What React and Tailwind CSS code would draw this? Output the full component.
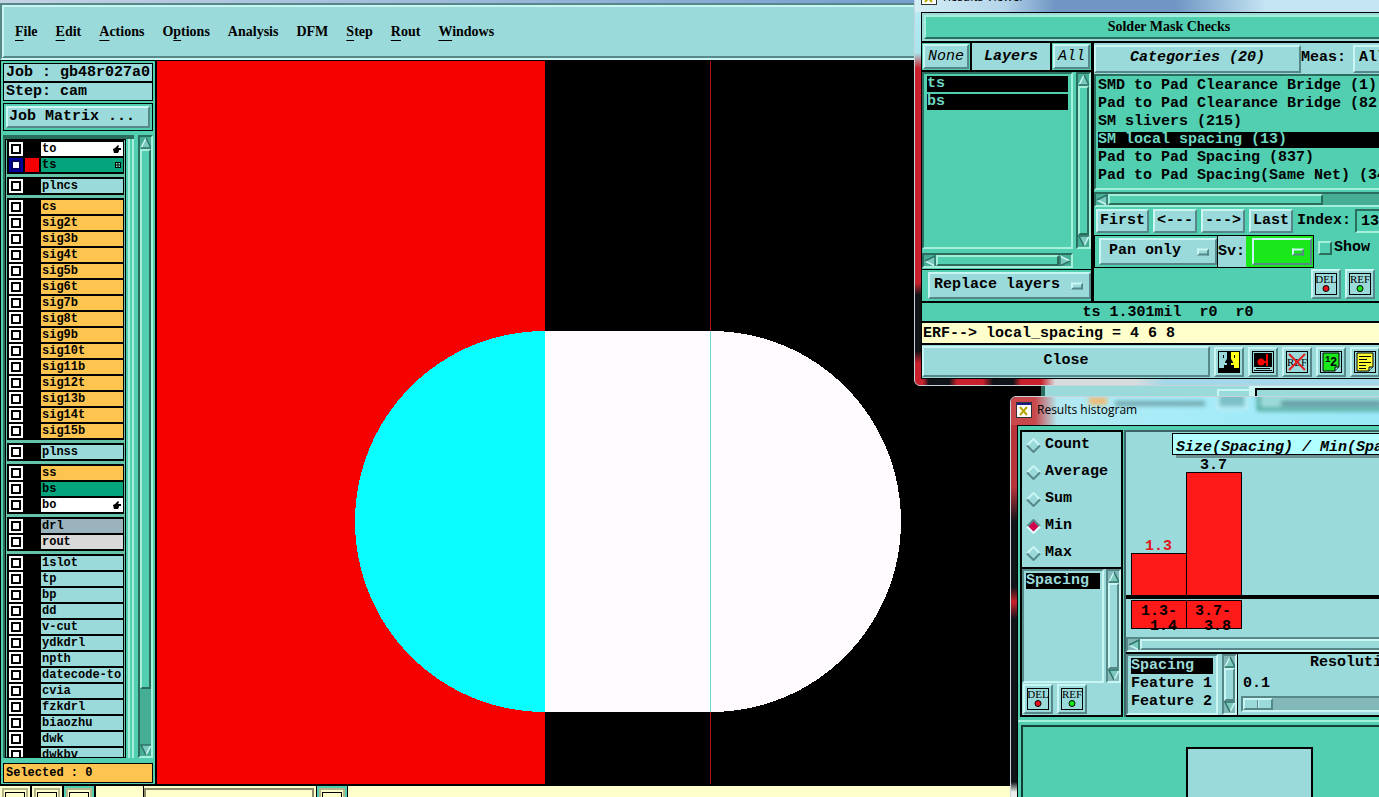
import React, { useState } from 'react';

const layerGroups = [
  [
    { name: 'to', tone: 'bg-white', mark: 'hand' },
    { name: 'ts', tone: 'bg-[#04a57c]', mark: 'grid', active: true },
  ],
  [{ name: 'plncs', tone: 'bg-[#9bdada]' }],
  ['cs', 'sig2t', 'sig3b', 'sig4t', 'sig5b', 'sig6t', 'sig7b', 'sig8t', 'sig9b', 'sig10t', 'sig11b', 'sig12t', 'sig13b', 'sig14t', 'sig15b'].map(
    (name) => ({ name, tone: 'bg-[#fdc54f]' })
  ),
  [{ name: 'plnss', tone: 'bg-[#9bdada]' }],
  [
    { name: 'ss', tone: 'bg-[#fdc54f]' },
    { name: 'bs', tone: 'bg-[#04a57c]' },
    { name: 'bo', tone: 'bg-white', mark: 'hand' },
  ],
  [
    { name: 'drl', tone: 'bg-[#9ab3bd]' },
    { name: 'rout', tone: 'bg-[#d9d9d9]' },
  ],
  ['1slot', 'tp', 'bp', 'dd', 'v-cut', 'ydkdrl', 'npth', 'datecode-to', 'cvia', 'fzkdrl', 'biaozhu', 'dwk', 'dwkbv'].map(
    (name) => ({ name, tone: 'bg-[#9bdada]' })
  ),
];

// [before, underlined letter, after]
const menus = [
  ['', 'F', 'ile'],
  ['', 'E', 'dit'],
  ['', 'A', 'ctions'],
  ['O', 'p', 'tions'],
  ['Analysis', '', ''],
  ['DFM', '', ''],
  ['', 'S', 'tep'],
  ['', 'R', 'out'],
  ['', 'W', 'indows'],
];

const categories = [
  'SMD to Pad Clearance Bridge (1)',
  'Pad to Pad Clearance Bridge (82)',
  'SM slivers (215)',
  'SM local spacing (13)',
  'Pad to Pad Spacing (837)',
  'Pad to Pad Spacing(Same Net) (34)',
];

const raised = 'border-2 border-t-[#c9f5f3] border-l-[#c9f5f3] border-r-[#56888a] border-b-[#56888a]';
const sunken = 'border-2 border-t-[#56888a] border-l-[#56888a] border-r-[#c9f5f3] border-b-[#c9f5f3]';
const raisedTeal = 'border-2 border-t-[#a6efdb] border-l-[#a6efdb] border-r-[#2a6d5d] border-b-[#2a6d5d]';
const sunkenTeal = 'border-2 border-t-[#2a6d5d] border-l-[#2a6d5d] border-r-[#a6efdb] border-b-[#a6efdb]';

function Arrow({ dir }) {
  const turn = { up: 0, right: 90, down: 180, left: 270 }[dir];
  return (
    <svg width="12" height="12" viewBox="0 0 12 12" className="shrink-0">
      <g transform={`rotate(${turn} 6 6)`}>
        <path d="M6 1 L11 11 H1 Z" fill="#7cc9bd" />
        <path d="M6 1 L1 11" stroke="#c9f5f3" strokeWidth="1.5" />
        <path d="M6 1 L11 11 H1" fill="none" stroke="#2f746a" strokeWidth="1.5" />
      </g>
    </svg>
  );
}

function Scrollbar({ horizontal, teal, thumb = 'flex-1', className = '' }) {
  const edge = teal ? sunkenTeal : sunken;
  const knob = teal ? `${raisedTeal} bg-[#52cfb0]` : `${raised} bg-[#9bdada]`;
  const trough = teal ? 'bg-[#45ae94]' : 'bg-[#82b8b8]';
  return (
    <div className={`flex shrink-0 items-center overflow-hidden ${horizontal ? 'h-[15px]' : 'w-[15px] flex-col'} ${edge} ${trough} ${className}`}>
      <Arrow dir={horizontal ? 'left' : 'up'} />
      <div className={`${thumb} ${horizontal ? 'h-full' : 'w-full'} ${knob}`} />
      {thumb !== 'flex-1' && <div className="flex-1" />}
      <Arrow dir={horizontal ? 'right' : 'down'} />
    </div>
  );
}

function LayerMark({ kind }) {
  if (kind === 'hand') {
    return (
      <svg width="8" height="8" viewBox="0 0 8 8">
        <path d="M0 4 L2 3 L5 0 L6 1 L5 3 H8 V5 H6 V6 L5 8 H1 Z" fill="#000" />
      </svg>
    );
  }
  return (
    <svg width="6" height="6" viewBox="0 0 6 6">
      <path d="M0 0H6V6H0Z" fill="#000" />
      <path d="M1 1H2.500V2.500H1ZM3.500 1H5V2.500H3.500ZM1 3.500H2.500V5H1ZM3.500 3.500H5V5H3.500Z" fill="#8fe0c8" />
    </svg>
  );
}

function LayerRow({ layer }) {
  return (
    <li className="flex h-4 items-center py-px pr-px pl-[2px]">
      <label className={`flex size-[14px] shrink-0 items-center justify-center ${layer.active ? 'bg-[#0000a0]' : 'bg-white'}`}>
        <input
          type="checkbox"
          aria-label={layer.name}
          className={`size-[10px] appearance-none border-2 bg-white ${layer.active ? 'border-[#000066]' : 'border-black'}`}
        />
      </label>
      <span className={`mx-[2px] h-[14px] w-[14px] shrink-0 ${layer.active ? 'bg-[#f60000]' : 'bg-black'}`} />
      <span className={`flex h-[14px] min-w-0 flex-1 items-center justify-between pr-[2px] pl-px text-[12px] leading-[14px] whitespace-nowrap ${layer.tone}`}>
        {layer.name}
        {layer.mark && <LayerMark kind={layer.mark} />}
      </span>
    </li>
  );
}

function Sidebar() {
  return (
    <aside className="flex w-[157px] shrink-0 flex-col border-r-2 border-l border-black bg-[#52cfb0] pt-[2px] pr-[2px] pl-[2px]">
      <div className="border border-black bg-[#9bdada] pl-[2px] leading-[17px] whitespace-pre">Job : gb48r027a0</div>
      <div className="border border-black bg-[#9bdada] pl-[2px] leading-[17px]">Step: cam</div>
      <div className="mt-[2px] border border-black p-[2px]">
        <button className={`block h-[22px] w-full bg-[#9bdada] pl-px text-left leading-[18px] ${raised}`}>Job Matrix ...</button>
      </div>
      <div className="mt-1 flex min-h-0 flex-1 gap-1">
        <div className="flex min-w-0 flex-1 border-t-4 border-l-2 border-[#2a6d5d]">
          <ul className="flex min-w-0 flex-1 flex-col gap-[3px] overflow-hidden border border-black bg-[#63c4aa] pr-px pl-px">
            {layerGroups.map((group) => (
              <li key={group[0].name} className="shrink-0 bg-black py-px">
                <ul>
                  {group.map((layer) => (
                    <LayerRow key={layer.name} layer={layer} />
                  ))}
                </ul>
              </li>
            ))}
          </ul>
          <div className="ml-[2px] w-[6px] border-x-2 border-[#a6efdb]" />
        </div>
        <Scrollbar teal thumb="h-[540px]" />
      </div>
      <div className="mt-[5px] mb-px h-[20px] shrink-0 border border-black bg-[#fdc54f] pl-[2px] text-[12px] leading-[18px]">Selected : 0</div>
    </aside>
  );
}

function Board() {
  return (
    <svg className="min-w-0 flex-1 bg-black" shapeRendering="crispEdges">
      <rect width="388" height="100%" fill="#f60000" />
      <path d="M388 270 A190 190.500 0 0 0 388 651 Z" fill="#08fdff" />
      <path d="M388 270 H554 A190 190.500 0 0 1 554 651 H388 Z" fill="#fffbff" />
      <rect x="553" width="1" height="270" fill="#b01018" />
      <rect x="553" y="270" width="1" height="381" fill="#63d8d8" />
      <rect x="553" y="651" width="1" height="100%" fill="#b01018" />
    </svg>
  );
}

function BottomBar() {
  return (
    <footer className="flex h-[13px] shrink-0 overflow-hidden border-t-2 border-black bg-[#ffffcc]">
      {[0, 1, 2].map((n) => (
        <div key={n} className={`flex w-8 items-start justify-center border-r-2 border-black pt-[2px] ${n === 2 ? 'bg-[#52cfb0]' : 'bg-[#ffffcc]'}`}>
          <div className="h-4 w-[26px] border-2 border-[#b5b58c] bg-[#ffffcc] px-px pt-[2px]">
            <div className="h-4 border border-black" />
          </div>
        </div>
      ))}
      <div className="w-12 border-r border-black" />
      <div className="mt-[2px] h-4 w-[170px] border-2 border-[#8c8c6a]" />
      <div className="ml-[2px] flex w-[32px] justify-center border-x border-black bg-[#52cfb0] pt-[2px]">
        <div className="h-4 w-[26px] border-2 border-[#b5b58c] bg-[#ffffcc] px-px pt-[2px]">
          <div className="h-4 border border-black" />
        </div>
      </div>
    </footer>
  );
}

function XIcon() {
  return (
    <svg width="16" height="16" viewBox="0 0 16 16" className="shrink-0">
      <path d="M0 0H16V16H0Z" fill="#333" />
      <path d="M1 1H15V15H1Z" fill="#fff" />
      <path d="M1 1H15V3H1Z" fill="#1a1a8c" />
      <path d="M4 5 L11 13 M11 5 L4 13" stroke="#b5a800" strokeWidth="2" />
    </svg>
  );
}

function SmallButton({ label, children }) {
  return (
    <button aria-label={label} className={`flex size-[30px] shrink-0 items-center justify-center bg-[#9bdada] ${raised}`}>
      {children}
    </button>
  );
}

function StampIcon({ text, color }) {
  return (
    <svg width="22" height="22" viewBox="0 0 22 22">
      <rect x="0.500" y="0.500" width="21" height="21" fill="none" stroke="#000" />
      <text x="11" y="10" textAnchor="middle" className="font-['Liberation_Serif'] text-[11px] font-normal">{text}</text>
      <circle cx="11" cy="15.500" r="3" fill={color} stroke="#000" />
    </svg>
  );
}

function StampButtons() {
  return (
    <div className="flex gap-1">
      <SmallButton label="Delete"><StampIcon text="DEL" color="#e8101c" /></SmallButton>
      <SmallButton label="Refresh"><StampIcon text="REF" color="#1be81b" /></SmallButton>
    </div>
  );
}

function OptionMenu({ label, value, className }) {
  return (
    <div className="relative">
      <select aria-label={label} defaultValue={value} className={`block w-full appearance-none ${raised} ${className}`}>
        <option value={value}>{value}</option>
      </select>
      <span className={`pointer-events-none absolute top-1/2 right-2 h-[7px] w-3 -translate-y-1/2 ${raised}`} />
    </div>
  );
}

function ResultsViewer() {
  return (
    <section className="absolute -top-[18px] left-[914px] flex w-[508px] flex-col rounded-md border border-[#c8d4dc] bg-[linear-gradient(180deg,#bfeefa_0,#a8e4ec_70px,#c8202c_85px,#c8202c_300px,#101418_312px,#101418_368px,#c8202c_380px)] px-[6px]">
      <header className="-mx-[6px] flex h-[29px] shrink-0 items-center gap-[6px] rounded-t-md bg-[linear-gradient(90deg,#d4eef6_0,#b4d4ea_90px,#6f96c4_140px,#6f96c4_260px,#c4e4f2_350px,#c4e4f2_100%)] pb-px pl-[6px] font-['Open_Sans',sans-serif] text-[12px] font-normal">
        <XIcon /> Results Viewer
      </header>
      <div className="border border-black bg-[#9bdada]">
        <h2 className={`mt-[2px] ml-[2px] h-[24px] bg-[#52cfb0] text-center font-['Liberation_Serif',serif] text-[14px] leading-[19px] ${raisedTeal}`}>Solder Mask Checks</h2>
        <div className="mt-[2px] flex border-t-2 border-black">
          <div className="flex w-[172px] shrink-0 flex-col border-r-3 border-black bg-[#52cfb0]">
            <div className="flex h-[29px] border-b-2 border-black italic">
              <div className="w-[50px] border-r-2 border-black p-px">
                <button className={`h-full w-full bg-[#9bdada] font-normal italic ${raised}`}>None</button>
              </div>
              <div className="flex-1 bg-[#9bdada] text-center leading-[27px]">Layers</div>
              <div className="w-[41px] border-l-2 border-black p-px">
                <button className={`h-full w-full bg-[#9bdada] font-normal italic ${raised}`}>All</button>
              </div>
            </div>
            <div className="flex h-[177px] justify-between">
              <ul className={`w-[151px] px-[3px] pt-[2px] leading-4 text-[#6fd8c2] ${sunkenTeal}`}>
                <li className="mb-[2px] h-4 bg-black">ts</li>
                <li className="h-4 bg-black">bs</li>
              </ul>
              <Scrollbar teal />
            </div>
            <Scrollbar horizontal teal className="mt-1 w-[151px]" />
            <div className="mt-px border-t border-black py-[2px] pl-[6px]">
              <OptionMenu label="Layer action" value="Replace layers" className="h-[27px] bg-[#9bdada] pl-1" />
            </div>
          </div>
          <div className="flex min-w-0 flex-1 flex-col bg-[#52cfb0] whitespace-nowrap">
            <div className="flex h-[31px] items-center bg-[#9bdada]">
              <button className={`h-[28px] w-[207px] shrink-0 bg-[#9bdada] italic ${raised}`}>Categories (20)</button>
              <span className="w-[52px]">Meas:</span>
              <div className="w-[60px]">
                <OptionMenu label="Meas" value="All" className="h-[28px] bg-[#9bdada] pl-1" />
              </div>
            </div>
            <ul className={`h-[116px] overflow-hidden px-[2px] pt-px leading-[18px] ${sunkenTeal}`}>
              {categories.map((name) => (
                <li key={name} className={name.startsWith('SM local') ? 'my-px h-4 bg-black leading-4 text-[#6fd8c2]' : ''}>{name}</li>
              ))}
            </ul>
            <Scrollbar horizontal teal thumb="w-[215px]" className="mt-[2px]" />
            <div className="flex h-[28px] items-start gap-1 pt-[2px] pl-[2px] leading-[20px]">
              <button className={`h-[24px] w-[53px] shrink-0 bg-[#9bdada] ${raised}`}>First</button>
              <button className={`h-[24px] w-[44px] shrink-0 bg-[#9bdada] ${raised}`}>&lt;---</button>
              <button className={`h-[24px] w-[44px] shrink-0 bg-[#9bdada] ${raised}`}>---&gt;</button>
              <button className={`h-[24px] w-[44px] shrink-0 bg-[#9bdada] ${raised}`}>Last</button>
              <label htmlFor="index" className="w-[54px] shrink-0 leading-[24px]">Index:</label>
              <input id="index" defaultValue="13" className={`h-[24px] w-[56px] bg-[#52cfb0] px-1 ${sunkenTeal}`} />
            </div>
            <div className="flex h-[33px]">
              <div className="flex w-[220px] shrink-0 border border-black">
                <div className="w-[123px] border-r border-black py-[2px] pl-1">
                  <OptionMenu label="Pan mode" value="Pan only" className="h-[27px] bg-[#9bdada] pl-2" />
                </div>
                <span className="w-[28px] bg-[#9bdada] leading-[31px]">Sv:</span>
                <div className="flex-1 bg-[#1be81b] py-[2px] pr-px pl-[6px]">
                  <OptionMenu label="Severity" value=" " className="h-[27px] bg-[#1be81b]" />
                </div>
              </div>
              <label className="ml-1 flex h-[26px] items-center gap-[2px]">
                <input type="checkbox" className={`size-[14px] appearance-none bg-[#52cfb0] ${raisedTeal}`} />
                Show
              </label>
            </div>
            <div className="flex h-[33px] items-start pt-px pl-[217px]">
              <StampButtons />
            </div>
          </div>
        </div>
        <div className="h-[22px] border-y-2 border-black bg-[#52cfb0] text-center leading-[20px] whitespace-pre">ts 1.301mil  r0  r0</div>
        <div className="h-[22px] border-b-2 border-black bg-[#ffffcc] pl-px leading-[22px]">ERF--&gt; local_spacing = 4 6 8</div>
        <div className="flex h-[33px] items-center gap-1">
          <button className={`h-[31px] w-[288px] shrink-0 bg-[#9bdada] ${raised}`}>Close</button>
          <SmallButton label="Compare">
            <svg width="22" height="22" viewBox="0 0 22 22">
              <path d="M0 0H22V22H0Z" fill="#000" />
              <path d="M1 1H9V8L7 11V12H9V14H6V17H1Z" fill="#9bdada" />
              <path d="M13 1H21V17H16V14H13V12H15V11L13 8Z" fill="#ffff1a" />
              <path d="M5 4H6V7H5ZM16 4H17V7H16Z" fill="#000" />
            </svg>
          </SmallButton>
          <SmallButton label="Snapshot">
            <svg width="22" height="22" viewBox="0 0 22 22">
              <rect x="0.500" y="0.500" width="21" height="21" fill="none" stroke="#000" />
              <path d="M2 2H20V16H2Z" fill="#000" />
              <circle cx="9" cy="11" r="3.500" fill="#f60000" />
              <path d="M12 10H14V3H16V15H14V12H12Z" fill="#f60000" />
              <path d="M4 17.500H18M2 19.500H20" stroke="#000" />
            </svg>
          </SmallButton>
          <SmallButton label="No reference">
            <svg width="22" height="22" viewBox="0 0 22 22">
              <rect x="0.500" y="0.500" width="21" height="21" fill="none" stroke="#000" />
              <text x="11" y="15" textAnchor="middle" className="font-['Liberation_Serif'] text-[11px] font-normal">REF</text>
              <path d="M3 3 L19 19 M19 3 L3 19" stroke="#e02020" strokeWidth="2" />
            </svg>
          </SmallButton>
          <SmallButton label="Numbering">
            <svg width="22" height="22" viewBox="0 0 22 22">
              <rect x="0.500" y="0.500" width="21" height="21" fill="none" stroke="#000" />
              <path d="M3 2H19V16L15 20H3Z" fill="#1be81b" stroke="#000" />
              <path d="M15 20V16H19" fill="#9bdada" stroke="#000" />
              <text x="5" y="11" className="text-[9px]">1</text>
              <text x="10" y="15" className="text-[12px]">2</text>
            </svg>
          </SmallButton>
          <SmallButton label="Notes">
            <svg width="22" height="22" viewBox="0 0 22 22">
              <rect x="0.500" y="0.500" width="21" height="21" fill="none" stroke="#000" />
              <path d="M3 2H19V16L15 20H3Z" fill="#ffff33" stroke="#000" />
              <path d="M15 20V16H19" fill="#9bdada" stroke="#000" />
              <path d="M5 5.500H17M5 8.500H13M5 11.500H17M5 14.500H12M5 17.500H12" stroke="#000" />
            </svg>
          </SmallButton>
        </div>
      </div>
      <div className="-mx-[6px] h-[6px] rounded-b-md bg-[linear-gradient(90deg,#c8202c_0,#c8202c_8px,#101418_14px,#101418_34px,#c8202c_42px,#c8202c_68px,#101418_78px,#101418_98px,#c8202c_106px,#c8202c_126px,#d8dcdc_140px,#d8dcdc_220px,#a4d8e8_250px,#a4d8e8_100%)]" />
    </section>
  );
}

function StatRadio({ name, checked, onSelect }) {
  return (
    <label className="flex h-[27px] items-center">
      <input type="radio" name="stat" checked={checked} onChange={() => onSelect(name)} className="sr-only" />
      <svg width="15" height="15" viewBox="0 0 15 15" className="mr-1">
        <path d="M7.500 2 L13 7.500 L7.500 13 L2 7.500 Z" fill={checked ? '#d0004c' : '#9bdada'} />
        <path d="M1 7.500 L7.500 1 L14 7.500" fill="none" stroke={checked ? '#56888a' : '#c9f5f3'} strokeWidth="2" />
        <path d="M1 7.500 L7.500 14 L14 7.500" fill="none" stroke={checked ? '#e4ffff' : '#56888a'} strokeWidth="2" />
      </svg>
      {name}
    </label>
  );
}

function Histogram() {
  return (
    <svg width="100%" height="205" className="block">
      <rect x="50" y="5" width="260" height="21" fill="#6b8f92" />
      <rect x="46.500" y="1.500" width="260" height="21" fill="#b2ffff" stroke="#000" />
      <text x="50" y="19" fontStyle="italic">Size(Spacing) / Min(Spacing)</text>
      <g fill="#ff1a1a" stroke="#000">
        <rect x="5.500" y="121.500" width="55" height="42" />
        <rect x="60.500" y="40.500" width="55" height="123" />
        <rect x="5.500" y="168.500" width="55" height="28" />
        <rect x="60.500" y="168.500" width="55" height="28" />
      </g>
      <rect y="163" width="100%" height="4" fill="#000" />
      <text x="74" y="37">3.7</text>
      <text x="19" y="118" fill="#e01818">1.3</text>
      <text x="15" y="183">1.3-</text>
      <text x="24" y="198">1.4</text>
      <text x="69" y="183">3.7-</text>
      <text x="78" y="198">3.8</text>
    </svg>
  );
}

function ResultsHistogram() {
  const [stat, setStat] = useState('Min');
  return (
    <section className="absolute top-[396px] left-[1010px] flex h-[430px] w-[540px] flex-col rounded-t-md border border-[#c8d4dc] bg-[linear-gradient(180deg,#b8343a_0,#b8343a_90px,#101418_125px,#101418_190px,#c8202c_205px,#101418_222px,#101418_385px,#eeeeee_395px)] px-[6px]">
      <header className="relative -mx-[6px] h-[28px] shrink-0 overflow-hidden rounded-t-md bg-[linear-gradient(90deg,#c8484c_0,#c8484c_24px,#b4e8f0_46px,#a8ecf8_150px,#8fe4f6_100%)]">
        {/* what shows through the glass title bar */}
        <div className="absolute inset-0 blur-[2px]">
          <div className="absolute top-0 left-[78px] h-2 w-[18px] bg-[#eebb77]" />
          <div className="absolute top-[4px] left-[104px] h-[5px] w-[90px] bg-[#6fa5ac]" />
          <div className="absolute -top-2 left-[206px] h-5 w-[30px] border-2 border-[#d8fbff] bg-[#7cc0c8]" />
          <div className="absolute -top-2 left-[246px] h-[22px] w-[300px] border-b-3 border-l-3 border-[#45a090] bg-[#9bdada]" />
          <div className="absolute top-[4px] left-[270px] h-[5px] w-[100px] bg-[#5c969e]" />
        </div>
        <div className="relative flex h-[26px] items-center gap-[5px] pl-[5px] font-['Open_Sans',sans-serif] text-[12px] font-normal">
          <XIcon /> Results histogram
        </div>
      </header>
      <div className="flex min-h-0 flex-1 flex-col border border-black bg-[#52cfb0]">
        <div className="mt-1 flex h-[287px] shrink-0 gap-px pl-[2px]">
          <div className="flex w-[103px] shrink-0 flex-col border-2 border-black bg-[#9bdada]">
            <fieldset className="border-b-2 border-black pl-1">
              {['Count', 'Average', 'Sum', 'Min', 'Max'].map((name) => (
                <StatRadio key={name} name={name} checked={name === stat} onSelect={setStat} />
              ))}
            </fieldset>
            <div className="flex h-[114px] justify-between">
              <ul className={`w-[82px] px-[2px] pt-[2px] ${sunken}`}>
                <li className="h-4 bg-black leading-4 text-[#9bdada]">Spacing</li>
              </ul>
              <Scrollbar />
            </div>
            <div className="pt-px pl-px">
              <StampButtons />
            </div>
          </div>
          <div className="flex min-w-0 flex-1 flex-col border-t-2 border-l-2 border-[#3c6466] bg-[#9bdada]">
            <Histogram />
            <Scrollbar horizontal />
            <div className="flex min-h-0 flex-1 border-t-2 border-b-2 border-black">
              <ul className={`w-[92px] shrink-0 overflow-hidden px-[3px] pt-px leading-[18px] whitespace-nowrap ${sunken}`}>
                <li className="my-px h-4 bg-black leading-4 text-[#9bdada]">Spacing</li>
                <li>Feature 1</li>
                <li>Feature 2</li>
              </ul>
              <Scrollbar className="ml-1" />
              <div className="min-w-0 flex-1 border-l border-black pl-[3px]">
                <label htmlFor="resolution" className="block pl-[69px] leading-[18px]">Resolution</label>
                <div className="pl-[2px] leading-[24px]">0.1</div>
                <input
                  id="resolution"
                  type="range"
                  defaultValue="0"
                  className={`block h-[16px] w-full appearance-none bg-[#82b8b8] [&::-webkit-slider-thumb]:h-3 [&::-webkit-slider-thumb]:w-[30px] [&::-webkit-slider-thumb]:appearance-none [&::-webkit-slider-thumb]:border-2 [&::-webkit-slider-thumb]:border-t-[#c9f5f3] [&::-webkit-slider-thumb]:border-r-[#56888a] [&::-webkit-slider-thumb]:border-b-[#56888a] [&::-webkit-slider-thumb]:border-l-[#c9f5f3] [&::-webkit-slider-thumb]:bg-[linear-gradient(90deg,#9bdada_12px,#56888a_12px,#56888a_13px,#c9f5f3_13px,#c9f5f3_14px,#9bdada_14px)] ${sunken}`}
                />
              </div>
            </div>
          </div>
        </div>
        <div className="mt-[3px] h-[2px] shrink-0 bg-[#a6efdb]" />
        <div className="mt-[3px] ml-[3px] min-h-0 flex-1 border-t-2 border-l-2 border-[#163c33] pt-5 pl-[163px]">
          <div className="h-full w-[127px] border-2 border-black bg-[#9bdada]" />
        </div>
      </div>
    </section>
  );
}

export default function App() {
  return (
    <div className="relative flex h-screen w-full flex-col overflow-hidden bg-black font-['Liberation_Mono',monospace] text-[15px] font-bold text-black">
      <div className="h-[3px] shrink-0 bg-linear-to-r from-[#c4d2e4] to-[#4f86c4]" />
      <nav className="h-[57px] shrink-0 border-2 border-t-[#56888a] border-r-[#c9f5f3] border-b-[#c9f5f3] border-l-[#56888a] bg-[#9bdada]">
        <div className={`flex h-full items-center gap-[18px] pl-[11px] font-['Liberation_Serif',serif] text-[14px] ${raised}`}>
          {menus.map(([before, key, after]) => (
            <button key={before + key + after}>
              {before}
              <span className="underline underline-offset-4">{key}</span>
              {after}
            </button>
          ))}
        </div>
      </nav>
      <div className="flex min-h-0 flex-1 border-t border-black">
        <Sidebar />
        <Board />
      </div>
      <BottomBar />

      {/* window peeking out between the two dialogs */}
      <div className="absolute top-[380px] left-[1041px] flex h-10 w-[400px] gap-[6px] border-l-4 border-[#2a6d5d] bg-[#c9f5f3]">
        <div className="flex w-[204px] items-end justify-end bg-[#9bdada] pb-2">
          <div className="h-[23px] w-8 border-2 border-r-0 border-[#c9f5f3]" />
        </div>
        <div className="mt-2 flex-1 border-t-2 border-l-2 border-black bg-[#9bdada]" />
      </div>
      <ResultsHistogram />
      <ResultsViewer />
    </div>
  );
}
